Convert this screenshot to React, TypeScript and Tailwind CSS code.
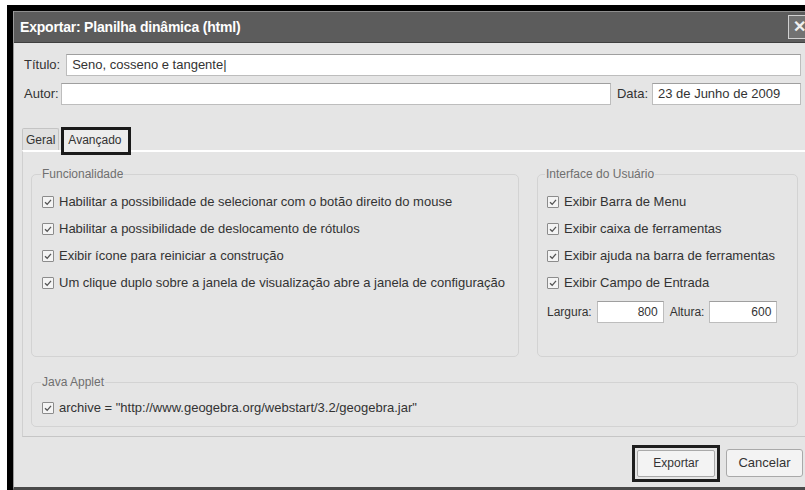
import React from "react";

function Check() {
  return (
    <span className="w-[12px] h-[12px] shrink-0 border border-[#8c8c8c] bg-[#f4f4f4] rounded-[1px] flex items-center justify-center">
      <svg width="8" height="8" viewBox="0 0 8 8">
        <path d="M1 4.2 L3.2 6.3 L7 1.8" fill="none" stroke="#555" strokeWidth="1.3" />
      </svg>
    </span>
  );
}

function CheckRow({ label }: { label: string }) {
  return (
    <div className="flex items-center gap-[5px] h-[27px]">
      <Check />
      <span className="whitespace-nowrap">{label}</span>
    </div>
  );
}

function Field({ className, value, right }: { className: string; value?: string; right?: boolean }) {
  return (
    <div
      className={`${className} h-[22px] bg-white border border-[#bdbdbd] border-t-[#9f9f9f] flex items-center px-[5px] ${right ? "justify-end" : ""}`}
    >
      <span className="whitespace-nowrap">{value}</span>
    </div>
  );
}

export default function App() {
  const funcs = [
    "Habilitar a possibilidade de selecionar com o botão direito do mouse",
    "Habilitar a possibilidade de deslocamento de rótulos",
    "Exibir ícone para reiniciar a construção",
    "Um clique duplo sobre a janela de visualização abre a janela de configuração",
  ];
  const ui = [
    "Exibir Barra de Menu",
    "Exibir caixa de ferramentas",
    "Exibir ajuda na barra de ferramentas",
    "Exibir Campo de Entrada",
  ];

  return (
    <div className="w-[805px] h-[490px] overflow-hidden bg-white font-['Liberation_Sans',Arial,sans-serif] text-[13px] text-[#333]">
      <div className="ml-[7px] mt-[5px] w-[806px] h-[485px] border-l-[6px] border-t-[6px] border-black bg-black">
        <div className="w-[800px] h-[479px] flex flex-col border-l border-[#9a9a9a] border-b-[3px] border-b-[#4a4a4a] bg-[#e5e5e5]">
          {/* title bar */}
          <div className="h-[32px] shrink-0 flex items-center bg-[#5c5c5c] border-t border-[#8e8e8e] border-b border-b-[#3f3f3f] pl-[6px]">
            <span className="text-white font-bold text-[14px] tracking-[-0.2px]">Exportar: Planilha dinâmica (html)</span>
            <div className="ml-auto mr-[2px] w-[23px] h-[24px] border border-[#d0d0d0] bg-[#727272] flex items-center justify-center text-[#efefef] text-[16px] font-bold">
              ✕
            </div>
          </div>

          {/* header fields */}
          <div className="pt-[11px] pl-[10px] pr-[12px] flex flex-col gap-[7px]">
            <div className="flex items-center gap-[6px]">
              <span>Título:</span>
              <Field className="flex-1" value="Seno, cosseno e tangente|" />
            </div>
            <div className="flex items-center">
              <span className="mr-[2px]">Autor:</span>
              <Field className="flex-1" />
              <span className="ml-[6px] mr-[4px]">Data:</span>
              <Field className="w-[149px]" value="23 de Junho de 2009" />
            </div>
          </div>

          {/* tabs */}
          <div className="mt-[19px] ml-[8px] flex items-end h-[26px] text-[12px]">
            <div className="h-[22px] px-[3px] border border-b-0 border-[#c4c4c4] bg-[#e0e0e0] rounded-t-[2px] flex items-center">
              Geral
            </div>
            <div className="relative h-[28px] w-[70px] ml-[2px] mb-[-5px] border-[3px] border-[#1a1a1a] bg-[#ececec] pl-[4px] pt-[1px] z-10">
              Avançado
            </div>
          </div>

          {/* tab panel */}
          <div className="ml-[8px] h-[287px] border-t-2 border-l border-b border-t-white border-l-[#d0d0d0] border-b-[#c6c6c6] pt-[15px] pl-[8px] pr-[3px] flex flex-col gap-[18px]">
            <div className="flex gap-[18px]">
              <fieldset className="w-[488px] h-[190px] border border-[#d3d3d3] rounded-[5px] pl-[10px]">
                <legend className="text-[#6f6f6f] text-[12px] ml-[-1px] px-[1px] leading-[14px]">Funcionalidade</legend>
                <div className="pt-[7px]">
                  {funcs.map((f) => (
                    <CheckRow key={f} label={f} />
                  ))}
                </div>
              </fieldset>
              <fieldset className="w-[261px] h-[190px] border border-[#d3d3d3] rounded-[5px] pl-[9px]">
                <legend className="text-[#6f6f6f] text-[12px] ml-[-2px] px-[1px] leading-[14px]">Interface do Usuário</legend>
                <div className="pt-[7px]">
                  {ui.map((f) => (
                    <CheckRow key={f} label={f} />
                  ))}
                  <div className="flex items-center mt-[5px] text-[12px]">
                    <span className="mr-[5px]">Largura:</span>
                    <Field className="w-[67px]" value="800" right />
                    <span className="ml-[6px] mr-[5px]">Altura:</span>
                    <Field className="w-[68px]" value="600" right />
                  </div>
                </div>
              </fieldset>
            </div>
            <fieldset className="w-[767px] h-[52px] border border-[#d3d3d3] rounded-[5px] pl-[10px]">
              <legend className="text-[#6f6f6f] text-[12px] ml-[-1px] px-[1px] leading-[14px]">Java Applet</legend>
              <div className="pt-[5px]">
                <CheckRow label={'archive = "http://www.geogebra.org/webstart/3.2/geogebra.jar"'} />
              </div>
            </fieldset>
          </div>

          {/* buttons */}
          <div className="flex-1 flex items-center justify-end gap-[6px] pr-[10px] pt-[2px] text-[12px]">
            <div className="border-[3px] border-[#1e1e1e] p-[2px]">
              <div className="w-[78px] h-[27px] border border-[#a9a9a9] bg-[#f3f3f3] rounded-[2px] flex items-center justify-center">
                Exportar
              </div>
            </div>
            <div className="w-[77px] h-[28px] border border-[#a9a9a9] bg-[#f3f3f3] rounded-[3px] flex items-center justify-center text-[13px]">
              Cancelar
            </div>
          </div>
        </div>
      </div>
    </div>
  );
}
